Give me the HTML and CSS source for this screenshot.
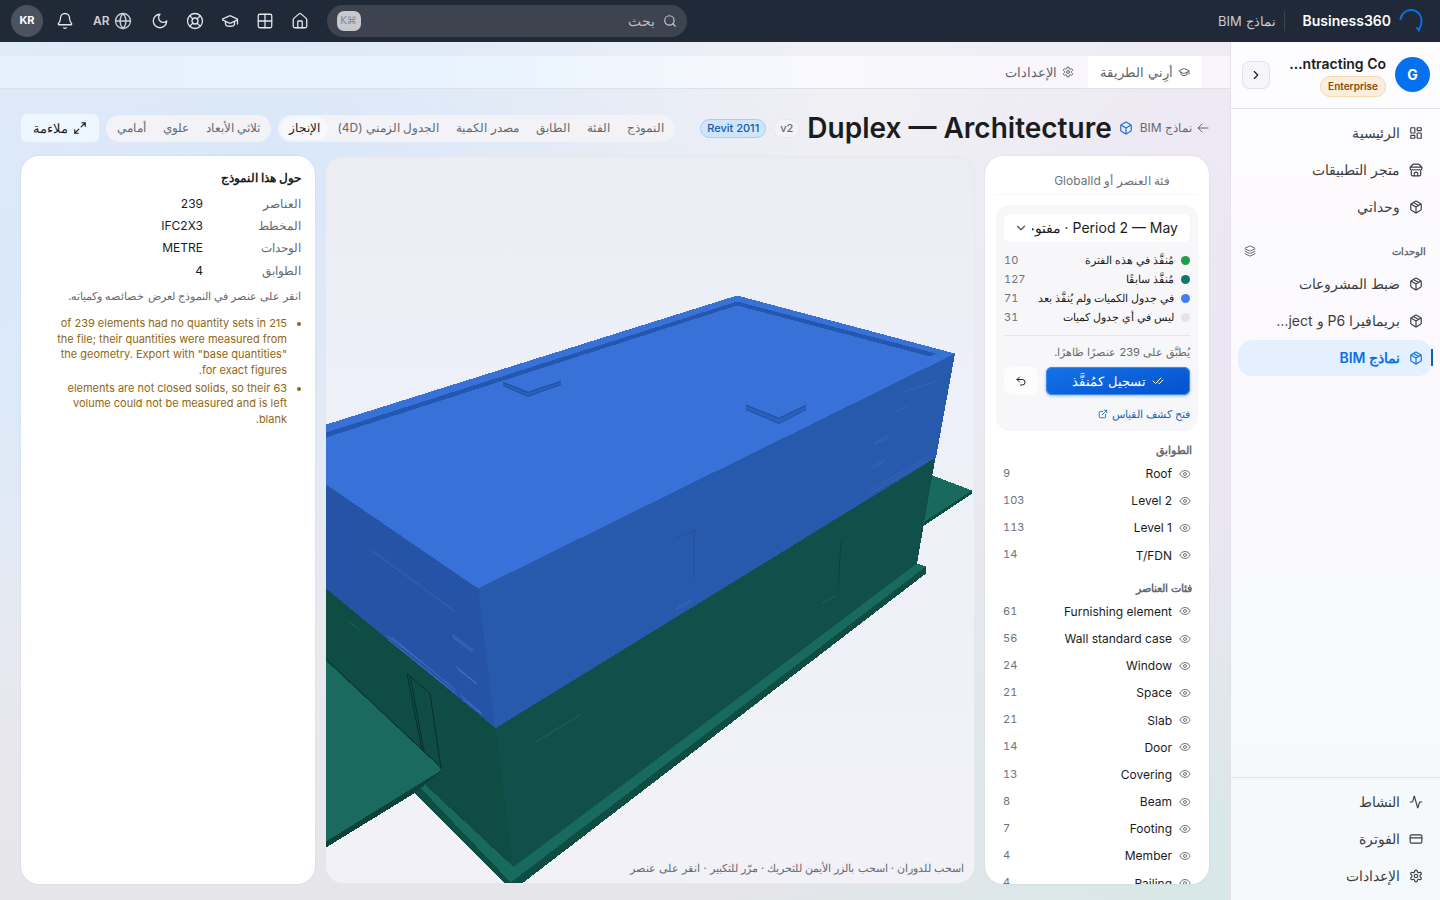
FILE: index.html
```html
<!DOCTYPE html>
<html lang="ar" dir="rtl">
<head>
<meta charset="utf-8">
<meta name="viewport" content="width=device-width, initial-scale=1">
<title>Business360 — نماذج BIM</title>
<link rel="stylesheet" href="styles.css">
</head>
<body>
<svg class="sprite" aria-hidden="true">
  <symbol id="home" viewBox="0 0 24 24"><path d="M15 21v-8a1 1 0 0 0-1-1h-4a1 1 0 0 0-1 1v8"/><path d="M3 10a2 2 0 0 1 .7-1.5l7-6a2 2 0 0 1 2.6 0l7 6A2 2 0 0 1 21 10v9a2 2 0 0 1-2 2H5a2 2 0 0 1-2-2z"/></symbol>
  <symbol id="grid" viewBox="0 0 24 24"><rect x="3" y="3" width="18" height="18" rx="2"/><path d="M3 12h18M12 3v18"/></symbol>
  <symbol id="cap" viewBox="0 0 24 24"><path d="M21.4 10.9a1 1 0 0 0 0-1.8L12.8 5.2a2 2 0 0 0-1.6 0L2.6 9.1a1 1 0 0 0 0 1.8l8.6 3.9a2 2 0 0 0 1.6 0z"/><path d="M22 10v6M6 12.500V16a6 3 0 0 0 12 0v-3.500"/></symbol>
  <symbol id="buoy" viewBox="0 0 24 24"><circle cx="12" cy="12" r="10"/><circle cx="12" cy="12" r="4"/><path d="m4.900 4.900 4.300 4.300M14.800 9.200l4.300-4.300M14.800 14.800l4.300 4.300M9.200 14.800l-4.300 4.300"/></symbol>
  <symbol id="moon" viewBox="0 0 24 24"><path d="M12 3a6 6 0 0 0 9 9 9 9 0 1 1-9-9Z"/></symbol>
  <symbol id="globe" viewBox="0 0 24 24"><circle cx="12" cy="12" r="10"/><path d="M12 2a14.500 14.500 0 0 0 0 20 14.500 14.500 0 0 0 0-20M2 12h20"/></symbol>
  <symbol id="bell" viewBox="0 0 24 24"><path d="M10.300 21a2 2 0 0 0 3.400 0"/><path d="M3.300 15.300A1 1 0 0 0 4 17h16a1 1 0 0 0 .7-1.700C19.400 14 18 12.500 18 8A6 6 0 0 0 6 8c0 4.500-1.400 6-2.700 7.300"/></symbol>
  <symbol id="search" viewBox="0 0 24 24"><circle cx="11" cy="11" r="8"/><path d="m21 21-4.300-4.300"/></symbol>
  <symbol id="dash" viewBox="0 0 24 24"><rect x="3" y="3" width="7" height="9" rx="1"/><rect x="14" y="3" width="7" height="5" rx="1"/><rect x="14" y="12" width="7" height="9" rx="1"/><rect x="3" y="16" width="7" height="5" rx="1"/></symbol>
  <symbol id="store" viewBox="0 0 24 24"><path d="m2 7 4.400-4.400A2 2 0 0 1 7.800 2h8.400a2 2 0 0 1 1.400.6L22 7M4 12v8a2 2 0 0 0 2 2h12a2 2 0 0 0 2-2v-8M15 22v-4a2 2 0 0 0-2-2h-2a2 2 0 0 0-2 2v4M2 7h20v3a2 2 0 0 1-2 2 2.700 2.700 0 0 1-1.600-.6.7.7 0 0 0-.8 0 2.700 2.700 0 0 1-3.200 0 .7.7 0 0 0-.8 0 2.700 2.700 0 0 1-3.200 0 .7.7 0 0 0-.8 0 2.700 2.700 0 0 1-3.200 0 .7.7 0 0 0-.8 0A2.700 2.700 0 0 1 4 12a2 2 0 0 1-2-2V7"/></symbol>
  <symbol id="package" viewBox="0 0 24 24"><path d="M11 21.700a2 2 0 0 0 2 0l7-4A2 2 0 0 0 21 16V8a2 2 0 0 0-1-1.700l-7-4a2 2 0 0 0-2 0l-7 4A2 2 0 0 0 3 8v8a2 2 0 0 0 1 1.700zM12 22V12M3.300 7 12 12l8.700-5M7.500 4.300l9 5.100"/></symbol>
  <symbol id="box" viewBox="0 0 24 24"><path d="M21 8a2 2 0 0 0-1-1.700l-7-4a2 2 0 0 0-2 0l-7 4A2 2 0 0 0 3 8v8a2 2 0 0 0 1 1.700l7 4a2 2 0 0 0 2 0l7-4A2 2 0 0 0 21 16ZM3.300 7l8.700 5 8.700-5M12 22V12"/></symbol>
  <symbol id="layers" viewBox="0 0 24 24"><path d="M12.800 2.200a2 2 0 0 0-1.600 0L2.600 6.100a1 1 0 0 0 0 1.800l8.600 3.900a2 2 0 0 0 1.600 0l8.600-3.900a1 1 0 0 0 0-1.800zM2 12a1 1 0 0 0 .6.9l8.600 3.900a2 2 0 0 0 1.600 0l8.600-3.900a1 1 0 0 0 .6-.9M2 17a1 1 0 0 0 .6.9l8.600 3.900a2 2 0 0 0 1.600 0l8.600-3.900a1 1 0 0 0 .6-.9"/></symbol>
  <symbol id="pulse" viewBox="0 0 24 24"><path d="M22 12h-2.500a2 2 0 0 0-1.900 1.500l-2.400 8.300a.3.3 0 0 1-.5 0L9.300 2.200a.3.3 0 0 0-.5 0l-2.300 8.300A2 2 0 0 1 4.500 12H2"/></symbol>
  <symbol id="card" viewBox="0 0 24 24"><rect x="2" y="5" width="20" height="14" rx="2"/><path d="M2 10h20"/></symbol>
  <symbol id="gear" viewBox="0 0 24 24"><path d="M9.700 4.100a2.300 2.300 0 0 1 4.600 0 2.300 2.300 0 0 0 3.400 1.900 2.300 2.300 0 0 1 2.300 4 2.300 2.300 0 0 0 0 4 2.300 2.300 0 0 1-2.300 4 2.300 2.300 0 0 0-3.400 1.900 2.300 2.300 0 0 1-4.600 0A2.300 2.300 0 0 0 6.300 18a2.300 2.300 0 0 1-2.300-4 2.300 2.300 0 0 0 0-4 2.300 2.300 0 0 1 2.300-4 2.300 2.300 0 0 0 3.400-1.900"/><circle cx="12" cy="12" r="3"/></symbol>
  <symbol id="chev-r" viewBox="0 0 24 24"><path d="m9 18 6-6-6-6"/></symbol>
  <symbol id="chev-d" viewBox="0 0 24 24"><path d="m6 9 6 6 6-6"/></symbol>
  <symbol id="arrow-l" viewBox="0 0 24 24"><path d="m10 20-8-8 8-8M2 12h20"/></symbol>
  <symbol id="expand" viewBox="0 0 24 24"><path d="M15 3h6v6M21 3l-7 7M3 21l7-7M9 21H3v-6"/></symbol>
  <symbol id="checks" viewBox="0 0 24 24"><path d="M18 6 7 17l-5-5M22 10l-7.500 7.500L13 16"/></symbol>
  <symbol id="undo" viewBox="0 0 24 24"><path d="M9 14 4 9l5-5"/><path d="M4 9h10.500a5.500 5.500 0 0 1 0 11H11"/></symbol>
  <symbol id="ext" viewBox="0 0 24 24"><path d="M15 3h6v6M10 14 21 3M18 13v6a2 2 0 0 1-2 2H5a2 2 0 0 1-2-2V8a2 2 0 0 1 2-2h6"/></symbol>
  <symbol id="eye" viewBox="0 0 24 24"><path d="M2 12.300a1 1 0 0 1 0-.7 10.800 10.800 0 0 1 20 0 1 1 0 0 1 0 .7 10.800 10.800 0 0 1-20 0"/><circle cx="12" cy="12" r="3"/></symbol>
</svg>

<header class="topbar">
  <a class="brand" href="#"><svg class="logo" viewBox="0 0 24 24" aria-hidden="true"><path d="M1.500 11A10.500 10.500 0 0 1 22.500 12c0 4-1.500 7-3.500 9"/><path d="M17.500 18.500 20 21l-.5 1.500"/></svg>Business360</a>
  <span class="crumb">نماذج BIM</span>
  <label class="search"><svg class="icon"><use href="#search"/></svg><input type="search" placeholder="بحث" aria-label="بحث"><kbd>⌘K</kbd></label>
  <nav class="tools" aria-label="أدوات">
    <button aria-label="الرئيسية"><svg class="icon"><use href="#home"/></svg></button>
    <button aria-label="التطبيقات"><svg class="icon"><use href="#grid"/></svg></button>
    <button aria-label="التعلم"><svg class="icon"><use href="#cap"/></svg></button>
    <button aria-label="المساعدة"><svg class="icon"><use href="#buoy"/></svg></button>
    <button aria-label="المظهر"><svg class="icon"><use href="#moon"/></svg></button>
    <button class="lang"><svg class="icon"><use href="#globe"/></svg>AR</button>
    <button aria-label="الإشعارات"><svg class="icon"><use href="#bell"/></svg></button>
    <button class="avatar">KR</button>
  </nav>
</header>

<div class="shell">
  <aside class="sidebar">
    <div class="org">
      <span class="org-mark">G</span>
      <div class="org-info"><strong>ntracting Co…</strong><span class="plan">Enterprise</span></div>
      <button class="collapse" aria-label="طي القائمة"><svg class="icon"><use href="#chev-r"/></svg></button>
    </div>
    <nav class="nav">
      <a href="#"><svg class="icon"><use href="#dash"/></svg>الرئيسية</a>
      <a href="#"><svg class="icon"><use href="#store"/></svg>متجر التطبيقات</a>
      <a href="#"><svg class="icon"><use href="#package"/></svg>وحداتي</a>
      <h2>الوحدات<svg class="icon"><use href="#layers"/></svg></h2>
      <a href="#"><svg class="icon"><use href="#package"/></svg>ضبط المشروعات</a>
      <a href="#"><svg class="icon"><use href="#package"/></svg>بريمافيرا P6 و ject…</a>
      <a href="#" class="current" aria-current="page"><svg class="icon"><use href="#package"/></svg>نماذج BIM</a>
    </nav>
    <nav class="nav nav-end">
      <a href="#"><svg class="icon"><use href="#pulse"/></svg>النشاط</a>
      <a href="#"><svg class="icon"><use href="#card"/></svg>الفوترة</a>
      <a href="#"><svg class="icon"><use href="#gear"/></svg>الإعدادات</a>
    </nav>
  </aside>

  <main class="main">
    <nav class="tabs">
      <a href="#" class="on"><svg class="icon"><use href="#cap"/></svg>أرِني الطريقة</a>
      <a href="#"><svg class="icon"><use href="#gear"/></svg>الإعدادات</a>
    </nav>

    <div class="head">
      <a class="back" href="#"><svg class="icon"><use href="#arrow-l"/></svg>نماذج BIM</a>
      <svg class="icon cube"><use href="#box"/></svg>
      <h1>Duplex — Architecture</h1>
      <span class="pill">v2</span>
      <span class="pill pill-blue">Revit 2011</span>
      <div class="seg seg-first">
        <button>النموذج</button><button>الفئة</button><button>الطابق</button><button>مصدر الكمية</button><button>الجدول الزمني (4D)</button><button class="on">الإنجاز</button>
      </div>
      <div class="seg"><button>ثلاثي الأبعاد</button><button>علوي</button><button>أمامي</button></div>
      <button class="fit"><svg class="icon"><use href="#expand"/></svg>ملاءمة</button>
    </div>

    <div class="work">
      <section class="panel tree">
        <input class="filter" type="text" placeholder="فئة العنصر أو GlobalId" aria-label="بحث عن عنصر">
        <div class="progress">
          <div class="select"><select aria-label="الفترة"><option>Period 2 — May · مفتوحة</option></select><svg class="icon"><use href="#chev-d"/></svg></div>
          <ul class="legend">
            <li><i class="dot green"></i>مُنفَّذ في هذه الفترة<b>10</b></li>
            <li><i class="dot teal"></i>مُنفَّذ سابقًا<b>127</b></li>
            <li><i class="dot blue"></i>في جدول الكميات ولم يُنفَّذ بعد<b>71</b></li>
            <li><i class="dot grey"></i>ليس في أي جدول كميات<b>31</b></li>
          </ul>
          <p>يُطبَّق على 239 عنصرًا ظاهرًا.</p>
          <div class="actions"><button class="primary"><svg class="icon"><use href="#checks"/></svg>تسجيل كمُنفَّذ</button><button class="undo" aria-label="تراجع"><svg class="icon"><use href="#undo"/></svg></button></div>
          <a class="sheet" href="#">فتح كشف القياس<svg class="icon"><use href="#ext"/></svg></a>
        </div>
        <h3>الطوابق</h3>
        <ul class="rows">
          <li><svg class="icon"><use href="#eye"/></svg>Roof<b>9</b></li>
          <li><svg class="icon"><use href="#eye"/></svg>Level 2<b>103</b></li>
          <li><svg class="icon"><use href="#eye"/></svg>Level 1<b>113</b></li>
          <li><svg class="icon"><use href="#eye"/></svg>T/FDN<b>14</b></li>
        </ul>
        <h3>فئات العناصر</h3>
        <ul class="rows">
          <li><svg class="icon"><use href="#eye"/></svg>Furnishing element<b>61</b></li>
          <li><svg class="icon"><use href="#eye"/></svg>Wall standard case<b>56</b></li>
          <li><svg class="icon"><use href="#eye"/></svg>Window<b>24</b></li>
          <li><svg class="icon"><use href="#eye"/></svg>Space<b>21</b></li>
          <li><svg class="icon"><use href="#eye"/></svg>Slab<b>21</b></li>
          <li><svg class="icon"><use href="#eye"/></svg>Door<b>14</b></li>
          <li><svg class="icon"><use href="#eye"/></svg>Covering<b>13</b></li>
          <li><svg class="icon"><use href="#eye"/></svg>Beam<b>8</b></li>
          <li><svg class="icon"><use href="#eye"/></svg>Footing<b>7</b></li>
          <li><svg class="icon"><use href="#eye"/></svg>Member<b>4</b></li>
          <li><svg class="icon"><use href="#eye"/></svg>Railing<b>4</b></li>
        </ul>
      </section>

      <section class="viewer" aria-label="عارض النموذج">
        <svg class="model" viewBox="326 156 648 727" preserveAspectRatio="xMidYMid slice" role="img" aria-label="Duplex">
          <g shape-rendering="crispEdges">
            <path fill="#18695e" d="M930 474l42 16-48 33z"/><path fill="#0f4c44" d="M972 490v3l-49 33v-4z"/>
            <path fill="#0f4c44" d="M414 792l12-12 87 92 413-306v7L522 883h-17z"/>
            <path fill="#18695e" d="M421 788l8-10 84 88 404-303 9 3-413 316-3-1z"/>
            <path fill="#0f4c44" d="M512 881l414-315v7L522 883h-9z"/>
            <path fill="#0f4c44" d="M326 580h170l18 287-86-80-102-126z"/>
            <path fill="#11504a" d="M495 720l441-266-19 109-404 304z"/>
            <path fill="#0d423b" d="M326 841l115-73v3l-27 22-88 54z"/>
            <path fill="#1a6a60" d="M326 660l112 105 3 5-115 71z"/>
            <path fill="#2554a6" d="M326 480h153l17 248-170-140z"/>
            <path fill="#2759ad" d="M478 584l477-231-19 104-441 271z"/>
            <path fill="#3872d8" d="M326 424l411-129 218 58-477 235-152-104z"/>
            <path fill="#2458b0" d="M326 432l411-131 199 52-6 3-193-51-411 132z"/>
          </g>
          <g fill="#2961bd">
            <path d="M503 381l25 10 33-11v4l-33 12-25-11zM746 404l33 13 27-13v5l-27 14-33-14z"/>
          </g>
          <g fill="none" stroke-width="1">
            <path stroke="#214f9d" d="M503 382l25 10 33-11M503 385l25 11 33-12M746 405l33 13 27-13M746 409l33 14 27-14"/>
            <path stroke="#3964b6" d="M372 550l83 61M873 444l15-6M875 442l13-7M871 468l14-7M873 465l12-6M868 494l65-37M871 489l58-33M676 609l16-8M678 606l14-7M902 392l34-11M895 412l12-6"/>
            <path stroke="#426fc6" d="M387 635l34 26M392 637l64 53M388 639l69 55M452 634l22 16M453 637l19 14M456 666l21 17M458 669l18 14M461 695l21 18M463 699l18 14"/>
            <path stroke="#245099" d="M694 530v48M675 538l21-8"/>
            <path stroke="#092f2c" d="M326 659l113 106M407 673l15 77M407 673l23 20 11 75M410 675l14 76"/>
            <path stroke="#17685e" d="M535 742l46-28M822 603l14-8M349 621l11 9"/>
            <path stroke="#0b423d" d="M841 541l-3 49"/>
          </g>
        </svg>
        <p class="hint">اسحب للدوران · اسحب بالزر الأيمن للتحريك · مرّر للتكبير · انقر على عنصر</p>
      </section>

      <section class="panel about">
        <h3>حول هذا النموذج</h3>
        <dl>
          <dt>العناصر</dt><dd>239</dd>
          <dt>المخطط</dt><dd>IFC2X3</dd>
          <dt>الوحدات</dt><dd>METRE</dd>
          <dt>الطوابق</dt><dd>4</dd>
        </dl>
        <p>انقر على عنصر في النموذج لعرض خصائصه وكمياته.</p>
        <ul class="warn">
          <li>215 of 239 elements had no quantity sets in the file; their quantities were measured from the geometry. Export with "base quantities" for exact figures.</li>
          <li>63 elements are not closed solids, so their volume could not be measured and is left blank.</li>
        </ul>
      </section>
    </div>
  </main>
</div>
</body>
</html>
```
FILE: styles.css
```css
* { box-sizing: border-box; }

body {
  margin: 0;
  height: 100vh;
  display: flex;
  flex-direction: column;
  overflow: hidden;
  font: 12px/1.6 Inter, "Liberation Sans", sans-serif;
  color: #1b1c20;
}

a { color: inherit; text-decoration: none; }
button, input, select { font: inherit; color: inherit; border: 0; background: none; padding: 0; margin: 0; }
button { cursor: pointer; display: flex; align-items: center; justify-content: center; white-space: nowrap; }
h1, h2, h3, p, ul, dl, dd { margin: 0; padding: 0; }
ul { list-style: none; }

.sprite { position: absolute; width: 0; height: 0; }
.icon {
  width: 14px;
  height: 14px;
  flex: none;
  fill: none;
  stroke: currentColor;
  stroke-width: 2;
  stroke-linecap: round;
  stroke-linejoin: round;
}

/* Top bar */
.topbar {
  flex: none;
  height: 42px;
  display: flex;
  align-items: center;
  padding: 0 17px 0 11px;
  background: #202938;
  color: #e3e6ea;
}
.brand { display: flex; align-items: center; gap: 8px; font-size: 14px; font-weight: 600; color: #fff; }
.logo { width: 24px; height: 24px; fill: none; stroke: #0b6fe0; stroke-width: 2; }
.crumb { margin-inline-start: 18px; padding-inline-start: 8px; border-inline-start: 1px solid #3c4452; font-size: 13px; color: #c9cdd4; }
.search {
  margin-inline-start: auto;
  width: 360px;
  height: 32px;
  display: flex;
  align-items: center;
  gap: 8px;
  padding: 0 10px;
  border-radius: 16px;
  background: #3d434f;
  color: #c3c7ce;
}
.search input { flex: 1; min-width: 0; font-size: 14px; outline: 0; }
.search input::placeholder { color: #b9bdc5; opacity: 1; }
.search kbd {
  width: 24px;
  height: 20px;
  border-radius: 7px;
  background: #c6c9ce;
  color: #85888e;
  font: 10px/20px "DejaVu Sans", sans-serif;
  text-align: center;
}
.tools { display: flex; align-items: center; gap: 17px; margin-inline-start: 18px; }
.tools .icon { width: 18px; height: 18px; stroke-width: 1.7; }
.lang { gap: 4px; padding: 0 2px; font-size: 12px; font-weight: 600; color: #cdd1d7; }
.avatar { width: 32px; height: 32px; margin-inline-start: -4px; border-radius: 50%; background: #4b525d; color: #fff; font-size: 11px; font-weight: 700; }

/* Shell */
.shell { flex: 1; min-height: 0; display: flex; }
.sidebar {
  flex: none;
  width: 210px;
  display: flex;
  flex-direction: column;
  border-inline-end: 1px solid #e2e1e8;
  background: linear-gradient(180deg, #fdfcfe 0%, #fbf9fd 40%, #f5f9fb 100%);
}
.org { height: 67px; display: flex; align-items: center; gap: 9px; padding: 0 10px 1px 11px; border-bottom: 1px solid #e4e3e9; }
.org-mark { flex: none; width: 35px; height: 35px; border-radius: 50%; background: #0671ee; color: #fff; font-size: 14px; line-height: 35px; font-weight: 700; text-align: center; }
.org-info { flex: 1; min-width: 0; display: flex; flex-direction: column; align-items: flex-start; gap: 2px; white-space: nowrap; }
.org-info strong { font-size: 14px; line-height: 21px; font-weight: 600; }
.plan { padding: 0 7px; border: 1px solid #f2d9b0; border-radius: 10px; background: #fbeedd; color: #8a4b08; font-size: 10px; line-height: 19px; font-weight: 600; }
.collapse { flex: none; width: 28px; height: 28px; border: 1px solid #e2e2e7; border-radius: 7px; background: #f6f6f9; }

.nav { display: flex; flex-direction: column; gap: 1px; padding: 6px 8px 0 7px; color: #3b3d42; }
.nav a { position: relative; height: 36px; display: flex; align-items: center; gap: 9px; padding: 0 9px; border-radius: 14px; font-size: 14px; white-space: nowrap; }
.nav .current { background: #e4f0fe; color: #0a6fe6; font-weight: 600; }
.nav .current::before { content: ""; position: absolute; inset-inline-start: -1px; top: 9px; width: 2px; height: 17px; background: #0a5fb8; }
.nav h2 { height: 35px; margin: 4px 0 0; display: flex; align-items: center; justify-content: space-between; padding: 7px 6px 0; font-size: 10px; font-weight: 600; color: #66686e; }
.nav h2 .icon { width: 12px; height: 12px; }
.nav-end { margin-top: auto; padding-bottom: 6px; border-top: 1px solid #e1e5e9; }

/* Main area */
.main {
  flex: 1;
  min-width: 0;
  display: flex;
  flex-direction: column;
  padding-top: 14px;
  background:
    radial-gradient(ellipse 45% 55% at 22% 15%, #d8e7f9 0%, rgba(216, 231, 249, 0) 100%),
    radial-gradient(ellipse 30% 60% at 100% 35%, #ece5f5 0%, rgba(236, 229, 245, 0) 100%),
    radial-gradient(ellipse 45% 55% at 100% 95%, #d7e8e7 0%, rgba(215, 232, 231, 0) 100%),
    radial-gradient(ellipse 20% 55% at 0% 30%, #dceafa 0%, rgba(220, 234, 250, 0) 100%),
    linear-gradient(180deg, #f0f0f5 0%, #ebebf0 50%, #e6e5ea 100%);
}
.tabs { flex: none; height: 33px; display: flex; gap: 2px; padding: 0 28px; border-bottom: 1px solid #dfe1e9; background: linear-gradient(90deg, #e5f2fe 0%, #e7f3fe 35%, #f8f9fd 65%, #f9f4fc 100%); }
.tabs a { display: flex; align-items: center; gap: 5px; padding: 0 12px; font-size: 13px; color: #5f6269; }
.tabs .on { background: #fff; }
.tabs .icon { width: 12px; height: 12px; }

.head { flex: none; height: 67px; display: flex; align-items: center; gap: 7px; padding: 11px 21px 0; white-space: nowrap; }
.back { display: flex; align-items: center; gap: 5px; color: #66696f; }
.back .icon { width: 12px; height: 12px; }
.cube { color: #1a6fd6; }
.head h1 { font-size: 28px; line-height: 36px; font-weight: 600; }
.pill { padding: 0 6px; border: 1px solid #e8e8ee; border-radius: 10px; background: #f3f3f7; color: #66696f; font-size: 11px; line-height: 17px; font-weight: 500; }
.pill-blue { border-color: #a9cdf2; background: #cfe5fb; color: #1259ad; }
.seg { display: flex; gap: 1px; height: 27px; padding: 2px 3px; border-radius: 14px; background: #f2f2f7; }
.seg-first { margin-inline-start: auto; }
.seg button { padding: 0 8px; border-radius: 12px; font-size: 12px; color: #66696f; }
.seg .on { background: #f6f8fb; color: #17181b; }
.fit { height: 28px; gap: 5px; padding: 0 12px; border-radius: 6px; background: #eef6ff; font-size: 13px; }

.work { flex: 1; min-height: 0; display: grid; grid-template-columns: 224px minmax(0, 1fr) 294px; gap: 10px; padding: 0 21px 16px; }
.panel { min-height: 0; overflow: hidden; border-radius: 18px; background: #fff; box-shadow: 0 0 2px rgba(40, 50, 90, .12); }

/* Model tree */
.tree { padding: 11px; }
.filter { display: block; width: 100%; height: 28px; padding: 0 28px; border-bottom: 1px solid #f7f7f9; outline: 0; }
.filter::placeholder { color: #707379; opacity: 1; }
.progress { margin-top: 10px; padding: 9px 8px; height: 226px; border-radius: 14px; background: #f7f7f9; font-size: 11px; }
.select { position: relative; }
.select select { display: block; width: 100%; height: 28px; padding: 0 12px 0 28px; border-radius: 7px; background: #fff; font-size: 14px; appearance: none; }
.select .icon { position: absolute; inset-inline-end: 10px; top: 7px; color: #4d5057; }
.legend { display: grid; gap: 2px; margin: 10px 0 0; padding-bottom: 9px; border-bottom: 1px solid #e6e6ea; }
.legend li { display: flex; align-items: center; gap: 7px; height: 17px; font-size: 11px; white-space: nowrap; }
.dot { flex: none; width: 9px; height: 9px; border-radius: 50%; }
.green { background: #1f9d4d; }
.teal { background: #0f766a; }
.blue { background: #3f7fee; }
.grey { background: #e5e5e7; }
.legend b, .rows b { margin-inline-start: auto; font-size: 11px; font-weight: 400; color: #6f7278; font-variant-numeric: tabular-nums; }
.progress p { margin: 7px 0 6px; line-height: 18px; color: #66696f; }
.actions { display: flex; gap: 8px; height: 28px; }
.primary { flex: 1; gap: 6px; border-radius: 6px; background: linear-gradient(165deg, #1473ea, #0450cb); color: #fff; font-size: 13px; box-shadow: inset 0 0 0 1px #3a8cf0, 0 1px 3px rgba(10, 90, 210, .4); }
.primary .icon { width: 12px; height: 12px; }
.undo { width: 34px; border-radius: 7px; background: #fcfcfd; }
.undo .icon { width: 12px; height: 12px; }
.sheet { display: flex; align-items: center; gap: 4px; margin-top: 10px; line-height: 18px; color: #1666b8; }
.sheet .icon { width: 10px; height: 10px; }
.tree h3 { margin: 11px 6px 2px; font-size: 11px; line-height: 16px; color: #66696f; }
.rows { padding: 0 6px; }
.rows li { display: flex; align-items: center; gap: 7px; padding: 4px 1px; }
.rows .icon { width: 12px; height: 12px; color: #74777d; }

/* 3D viewer */
.viewer { position: relative; min-height: 0; overflow: hidden; border: 1px solid #e5e8ef; border-radius: 18px; background: linear-gradient(180deg, #ecedf3 0%, #edf0f8 30%, #f2f1f7 100%); }
.model { display: block; width: 100%; height: 100%; }
.hint { position: absolute; inset-inline-start: 10px; bottom: 5px; font-size: 11px; color: #66696f; }

/* About */
.about { padding: 14px; }
.about h3 { font-size: 12px; line-height: 16px; }
.about dl { display: grid; grid-template-columns: 90px 1fr; gap: 3px 8px; margin-top: 8px; }
.about dt { color: #66696f; }
.about p { margin-top: 8px; font-size: 11px; color: #66696f; }
.warn { margin-top: 11px; padding-inline: 14px 13px; list-style: disc; font-size: 11px; line-height: 1.4; color: #91660f; }
.warn li + li { margin-top: 3px; }
```
